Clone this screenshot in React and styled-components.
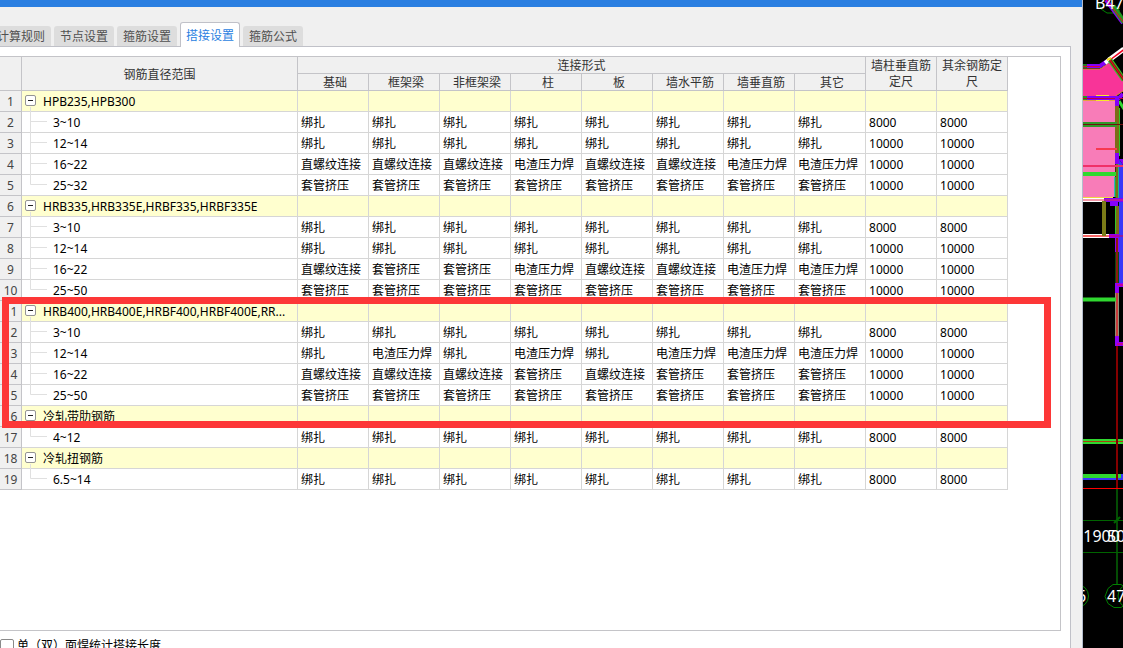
import React, { useState } from 'react';
import styled, { createGlobalStyle, css } from 'styled-components';

const TABS = ['计算规则', '节点设置', '箍筋设置', '搭接设置', '箍筋公式'];

const JOINTS = ['基础', '框架梁', '非框架梁', '柱', '板', '墙水平筋', '墙垂直筋', '其它'];

const B = '绑扎';
const Z = '直螺纹连接';
const T = '套管挤压';
const D = '电渣压力焊';

const GROUPS = [
  {
    name: 'HPB235,HPB300',
    rows: [
      { range: '3~10', joints: [B, B, B, B, B, B, B, B], length: 8000 },
      { range: '12~14', joints: [B, B, B, B, B, B, B, B], length: 10000 },
      { range: '16~22', joints: [Z, Z, Z, D, Z, Z, D, D], length: 10000 },
      { range: '25~32', joints: [T, T, T, T, T, T, T, T], length: 10000 },
    ],
  },
  {
    name: 'HRB335,HRB335E,HRBF335,HRBF335E',
    rows: [
      { range: '3~10', joints: [B, B, B, B, B, B, B, B], length: 8000 },
      { range: '12~14', joints: [B, B, B, B, B, B, B, B], length: 10000 },
      { range: '16~22', joints: [Z, T, T, D, Z, Z, D, D], length: 10000 },
      { range: '25~50', joints: [T, T, T, T, T, T, T, T], length: 10000 },
    ],
  },
  {
    name: 'HRB400,HRB400E,HRBF400,HRBF400E,RR...',
    rows: [
      { range: '3~10', joints: [B, B, B, B, B, B, B, B], length: 8000 },
      { range: '12~14', joints: [B, D, B, D, B, D, D, D], length: 10000 },
      { range: '16~22', joints: [Z, Z, Z, T, Z, T, T, T], length: 10000 },
      { range: '25~50', joints: [T, T, T, T, T, T, T, T], length: 10000 },
    ],
  },
  {
    name: '冷轧带肋钢筋',
    rows: [{ range: '4~12', joints: [B, B, B, B, B, B, B, B], length: 8000 }],
  },
  {
    name: '冷轧扭钢筋',
    rows: [{ range: '6.5~14', joints: [B, B, B, B, B, B, B, B], length: 8000 }],
  },
];

// 分组和明细按顺序编号
const buildRows = () => {
  const list = [];
  GROUPS.forEach(group => {
    list.push({ no: list.length + 1, group: true, name: group.name });
    group.rows.forEach((row, index) => {
      list.push({ no: list.length + 1, last: index === group.rows.length - 1, ...row });
    });
  });
  return list;
};

const ROWS = buildRows();

export default function App() {
  const [tab, setTab] = useState('搭接设置');

  return (
    <>
      <GlobalStyle />
      <Screen>
        <Dialog>
          <TitleBar />
          <TabList role="tablist">
            {TABS.map(name => (
              <Tab
                key={name}
                type="button"
                role="tab"
                aria-selected={tab === name}
                $active={tab === name}
                onClick={() => setTab(name)}
              >
                {name}
              </Tab>
            ))}
          </TabList>
          <Panel>
            <Sheet>
              <LapTable />
              <Highlight />
            </Sheet>
            <Footer>
              <CheckLabel htmlFor="weld">
                <CheckBox id="weld" type="checkbox" />
                单（双）面焊统计搭接长度
              </CheckLabel>
            </Footer>
          </Panel>
        </Dialog>
        <Drawing />
      </Screen>
    </>
  );
}

function LapTable() {
  return (
    <Table>
      <colgroup>
        <Col $width={22} />
        <Col $width={276} />
        {JOINTS.map(name => (
          <Col key={name} $width={71} />
        ))}
        <Col $width={71} />
        <Col $width={71} />
      </colgroup>
      <thead>
        <tr>
          <Head rowSpan={2} />
          <Head rowSpan={2} $single>
            钢筋直径范围
          </Head>
          <Head colSpan={8} $single>
            连接形式
          </Head>
          <Head rowSpan={2}>墙柱垂直筋定尺</Head>
          <Head rowSpan={2}>其余钢筋定尺</Head>
        </tr>
        <tr>
          {JOINTS.map(name => (
            <SubHead key={name} $single>
              {name}
            </SubHead>
          ))}
        </tr>
      </thead>
      <tbody>
        {ROWS.map(row => (
          <Row key={row.no} $group={row.group}>
            <RowNo>{row.no}</RowNo>
            <TreeCell>
              <TreeItem>
                {row.group ? <Toggle /> : <Branch last={row.last} />}
                <TreeText>{row.group ? row.name : row.range}</TreeText>
              </TreeItem>
            </TreeCell>
            {JOINTS.map((name, index) => (
              <Cell key={name}>{row.group ? '' : row.joints[index]}</Cell>
            ))}
            <Cell>{row.length}</Cell>
            <Cell>{row.length}</Cell>
          </Row>
        ))}
      </tbody>
    </Table>
  );
}

function Toggle() {
  return (
    <TreeIcon width="21" height="21" viewBox="0 0 21 21">
      <path d="M8.5 16v5" stroke="#e0e0e0" />
      <rect x="3.5" y="4.5" width="10" height="10" rx="1.5" fill="#fff" stroke="#949494" />
      <path d="M6 9.5h5" stroke="#222" />
    </TreeIcon>
  );
}

function Branch({ last }) {
  return (
    <TreeIcon width="31" height="21" viewBox="0 0 31 21">
      <path d={last ? 'M8.5 0v9.5H25' : 'M8.5 0v21M8.5 9.5H25'} fill="none" stroke="#e0e0e0" />
    </TreeIcon>
  );
}

function Drawing() {
  return (
    <Canvas>
      <svg width="40" height="648" viewBox="0 0 40 648">
        {/* 板 */}
        <path d="M0 69h17l10-7 13 18v11l-7 5H0z" fill="#f83498" />
        <path d="M0 69h17l10-7M40 91l-7 5" fill="none" stroke="#d08a30" />
        <path d="M0 100h32v97H0z" fill="#f87cb8" />
        <path d="M0 100.5h32" stroke="#e8a040" />
        <path d="M36 159l4 6v118h-4z" fill="#3838f8" />
        <path d="M36 159l4 6v-6z" fill="#8800f8" />

        {/* 上部梁 */}
        <path d="M0 66h4" stroke="#2a7a20" strokeWidth="4" />
        <path d="M4 66h13l9-6" fill="none" stroke="#8400f8" strokeWidth="4" />
        <path d="M0 66.5h17" stroke="#e0003c" />
        <path d="M22 63l5-4" stroke="#fff" strokeWidth="4" />
        <path d="M26 60L41 49" stroke="#fff" strokeWidth="5" />
        <path d="M27 60L41 49.5" stroke="#f00020" strokeWidth="1.5" />
        <path d="M27 60l14 20" stroke="#30c828" strokeWidth="5" />
        <path d="M27 60l14 20" stroke="#7a2a10" strokeWidth="3" />
        <path d="M27 60l14 20" stroke="#f00020" />
        <path d="M24 60l4-2" stroke="#f0e020" strokeWidth="2" />
        <path d="M0 98h4" stroke="#2a9a20" strokeWidth="4" />
        <path d="M4 98h32l4-4" fill="none" stroke="#8400f8" strokeWidth="4" />
        <path d="M13 95.5h13M13 100.5h13" stroke="#f8e828" />
        <path d="M0 98.5h40" stroke="#c0003c" />
        <path d="M36 101l5 8" stroke="#30d830" strokeWidth="3" />

        {/* 竖向梁 */}
        <path d="M34 106v47" stroke="#7c6c18" strokeWidth="4" />
        <path d="M36.5 108v48" stroke="#30c828" />
        <path d="M34 98v8M34 153v11" stroke="#8400f8" strokeWidth="4" />
        <path d="M34 164v36" stroke="#7c6c18" strokeWidth="3" />
        <path d="M35.5 164v36" stroke="#18b890" />
        <path d="M31.5 177v20" stroke="#38b0c0" />
        <path d="M32.5 177v20" stroke="#30a828" />
        <path d="M0 124.5h34" stroke="#309828" strokeWidth="5" />
        <path d="M0 124.5h40" stroke="#701010" />
        <path d="M13 149h21" stroke="#f83850" strokeWidth="2" />
        <path d="M0 166h40" stroke="#f03068" strokeWidth="2" />
        <path d="M0 174h33" stroke="#30d830" strokeWidth="4" />

        {/* 中部 */}
        <path d="M0 197.5h30" stroke="#f0d840" />
        <path d="M0 200h21" stroke="#fff" strokeWidth="4" />
        <path d="M21 200h19" stroke="#8400f8" strokeWidth="4" />
        <path d="M27 204h8" stroke="#8400f8" strokeWidth="4" />
        <path d="M0 200h40" stroke="#e83050" />
        <path d="M0 236h26" stroke="#fff" strokeWidth="4" />
        <path d="M0 236h26" stroke="#f86868" strokeWidth="2" />
        <path d="M21 201v35" stroke="#7c7c18" strokeWidth="4" />
        <path d="M34 206v28" stroke="#7c6c18" strokeWidth="4" />
        <path d="M32.5 206v28" stroke="#30c828" />
        <path d="M26 236h10M34 236v16M34 283v10M32 285h8" stroke="#9000f8" strokeWidth="4" />
        <path d="M26 236h14" stroke="#d80050" />
        <path d="M34 252v31" stroke="#0c4a10" strokeWidth="4" />
        <path d="M34 238v45" stroke="#8c1c10" strokeWidth="2" />
        <path d="M34 285h6" stroke="#f00040" />
        <path d="M34 293v43" stroke="#909078" strokeWidth="4" />
        <path d="M34 293v43" stroke="#c83c3c" strokeWidth="2" />
        <path d="M34 336v10M32 344h8" stroke="#9000f8" strokeWidth="4" />
        <path d="M34 344h6" stroke="#f00040" />
        <path d="M0 299.5h33" stroke="#30d830" strokeWidth="4" />

        {/* 下部轴线 */}
        <path d="M0 441.5h40" stroke="#30d830" strokeWidth="5" />
        <path d="M0 441.5h40" stroke="#a84010" />
        <path d="M0 476h39" stroke="#30d830" strokeWidth="4" />
        <path d="M0 479h40M39 474v6" stroke="#3838f8" strokeWidth="2" />
        <path d="M0 488.5h40" stroke="#f00" />
        <path d="M34 346v142" stroke="#840000" strokeWidth="2" />
        <path d="M34 489v95" stroke="#044c04" strokeWidth="2" />
        <path d="M0 520.5h40M0 552.5h40" stroke="#006400" />
        <path d="M31 523l6-6" stroke="#006400" strokeWidth="2" />
        <g fill="none" stroke="#008000">
          <circle cx="-6" cy="596" r="11.5" />
          <path d="M30 584.5h8l6 4 3 8-3 7-6 4h-7l-6-4-3-7 3-8z" />
          <circle cx="47" cy="596" r="12" />
          <path d="M15 2l3 7 6 4h7l6-5M26 0l3 7 8 4" />
        </g>
        <path d="M23 0l17 23" stroke="#8400f8" strokeWidth="4" />
        <path d="M30 6l11 16" stroke="#209820" strokeWidth="5" />
        <path d="M24 0l17 23" stroke="#f00020" />
        <DrawingText x="12" y="9">
          B47
        </DrawingText>
        <DrawingText x="-4" y="542">
          .1900
        </DrawingText>
        <DrawingText x="24" y="542">
          50
        </DrawingText>
        <DrawingText x="-6" y="602">
          6
        </DrawingText>
        <DrawingText x="24" y="602">
          47
        </DrawingText>
      </svg>
    </Canvas>
  );
}

const GlobalStyle = createGlobalStyle`
  * {
    box-sizing: border-box;
  }
  body {
    margin: 0;
    font-family: 'Noto Sans', 'Noto Sans CJK SC', sans-serif;
    font-size: 12px;
    color: #000;
    background-color: #f0f0f0;
  }
`;

const Screen = styled.div`
  display: flex;
  height: 100vh;
  overflow: hidden;
`;

const Dialog = styled.main`
  flex: 1;
  min-width: 0;
  display: flex;
  flex-direction: column;
  border-right: 1px solid #b4bccc;
  background-color: #f0f0f0;
`;

const TitleBar = styled.header`
  flex: none;
  height: 7px;
  background-color: #2b7fe1;
`;

const TabList = styled.div`
  display: flex;
  flex: none;
  align-items: flex-end;
  gap: 3px;
  height: 40px;
  margin-left: -9px;
  margin-bottom: -1px;
  padding-bottom: 1px;
`;

const Tab = styled.button`
  width: 60px;
  height: 20px;
  padding: 2px 0 0;
  border: 0;
  border-radius: 3px 3px 0 0;
  font-family: inherit;
  font-size: 12px;
  line-height: 18px;
  white-space: nowrap;
  color: #505050;
  background-color: #dddddd;
  ${props =>
    props.$active &&
    css`
      z-index: 1;
      height: 25px;
      margin-bottom: -1px;
      border: 1px solid #c0c1c8;
      border-bottom: 0;
      color: #2b7fe1;
      background-color: #fff;
    `}
`;

const Panel = styled.section`
  flex: 1;
  min-height: 0;
  display: flex;
  flex-direction: column;
  margin-right: 11px;
  padding: 9px 9px 0 0;
  border: 1px solid #c0c1c8;
  border-left: 0;
  border-bottom: 0;
  background-color: #fff;
`;

const Sheet = styled.div`
  position: relative;
  flex: 1;
  min-height: 0;
  border: 1px solid #c4c4c8;
  border-left: 0;
`;

const Highlight = styled.div`
  position: absolute;
  top: 240px;
  left: 2px;
  right: 9px;
  height: 131px;
  border: 7px solid #fd3737;
  pointer-events: none;
`;

const Table = styled.table`
  width: 1008px;
  table-layout: fixed;
  border-collapse: separate;
  border-spacing: 0;
`;

const Col = styled.col`
  width: ${props => props.$width}px;
`;

const Head = styled.th`
  height: 17px;
  padding: ${props => (props.$single ? '2px 4px 0' : '0 4px')};
  border-right: 1px solid #c4c4c8;
  border-bottom: 1px solid #c4c4c8;
  font-weight: 400;
  line-height: ${props => (props.$single ? 14 : 16)}px;
  color: #333;
  background-color: #f0f0f0;
`;

const SubHead = styled(Head)`
  padding-left: 8px;
`;

const Row = styled.tr`
  background-color: ${props => (props.$group ? '#ffffcf' : '#fff')};
`;

const Cell = styled.td`
  height: 21px;
  padding: 2px 0 0 3px;
  border-right: 1px solid #d6d6d6;
  border-bottom: 1px solid #d6d6d6;
  line-height: 18px;
  white-space: nowrap;
`;

const TreeCell = styled(Cell)`
  padding: 0;
`;

const RowNo = styled.th`
  padding: 2px 0 0;
  border-right: 1px solid #c4c4c8;
  border-bottom: 1px solid #c4c4c8;
  font-weight: 400;
  line-height: 18px;
  color: #444;
  background-color: #f0f0f0;
`;

const TreeItem = styled.div`
  display: flex;
  height: 20px;
`;

const TreeIcon = styled.svg`
  flex: none;
`;

const TreeText = styled.span`
  padding-top: 2px;
`;

const Footer = styled.footer`
  flex: none;
  height: 17px;
  padding-top: 7px;
`;

const CheckLabel = styled.label`
  display: flex;
  align-items: center;
  gap: 3px;
  line-height: 16px;
`;

const CheckBox = styled.input`
  appearance: none;
  width: 14px;
  height: 14px;
  margin: 0;
  border: 1px solid #8a8a8a;
  border-radius: 2px;
  background-color: #fff;
`;

const Canvas = styled.aside`
  flex: none;
  width: 40px;
  overflow: hidden;
  background-color: #000;

  svg {
    display: block;
  }
`;

const DrawingText = styled.text`
  font-family: 'Noto Sans', sans-serif;
  font-size: 16px;
  fill: #fff;
`;
